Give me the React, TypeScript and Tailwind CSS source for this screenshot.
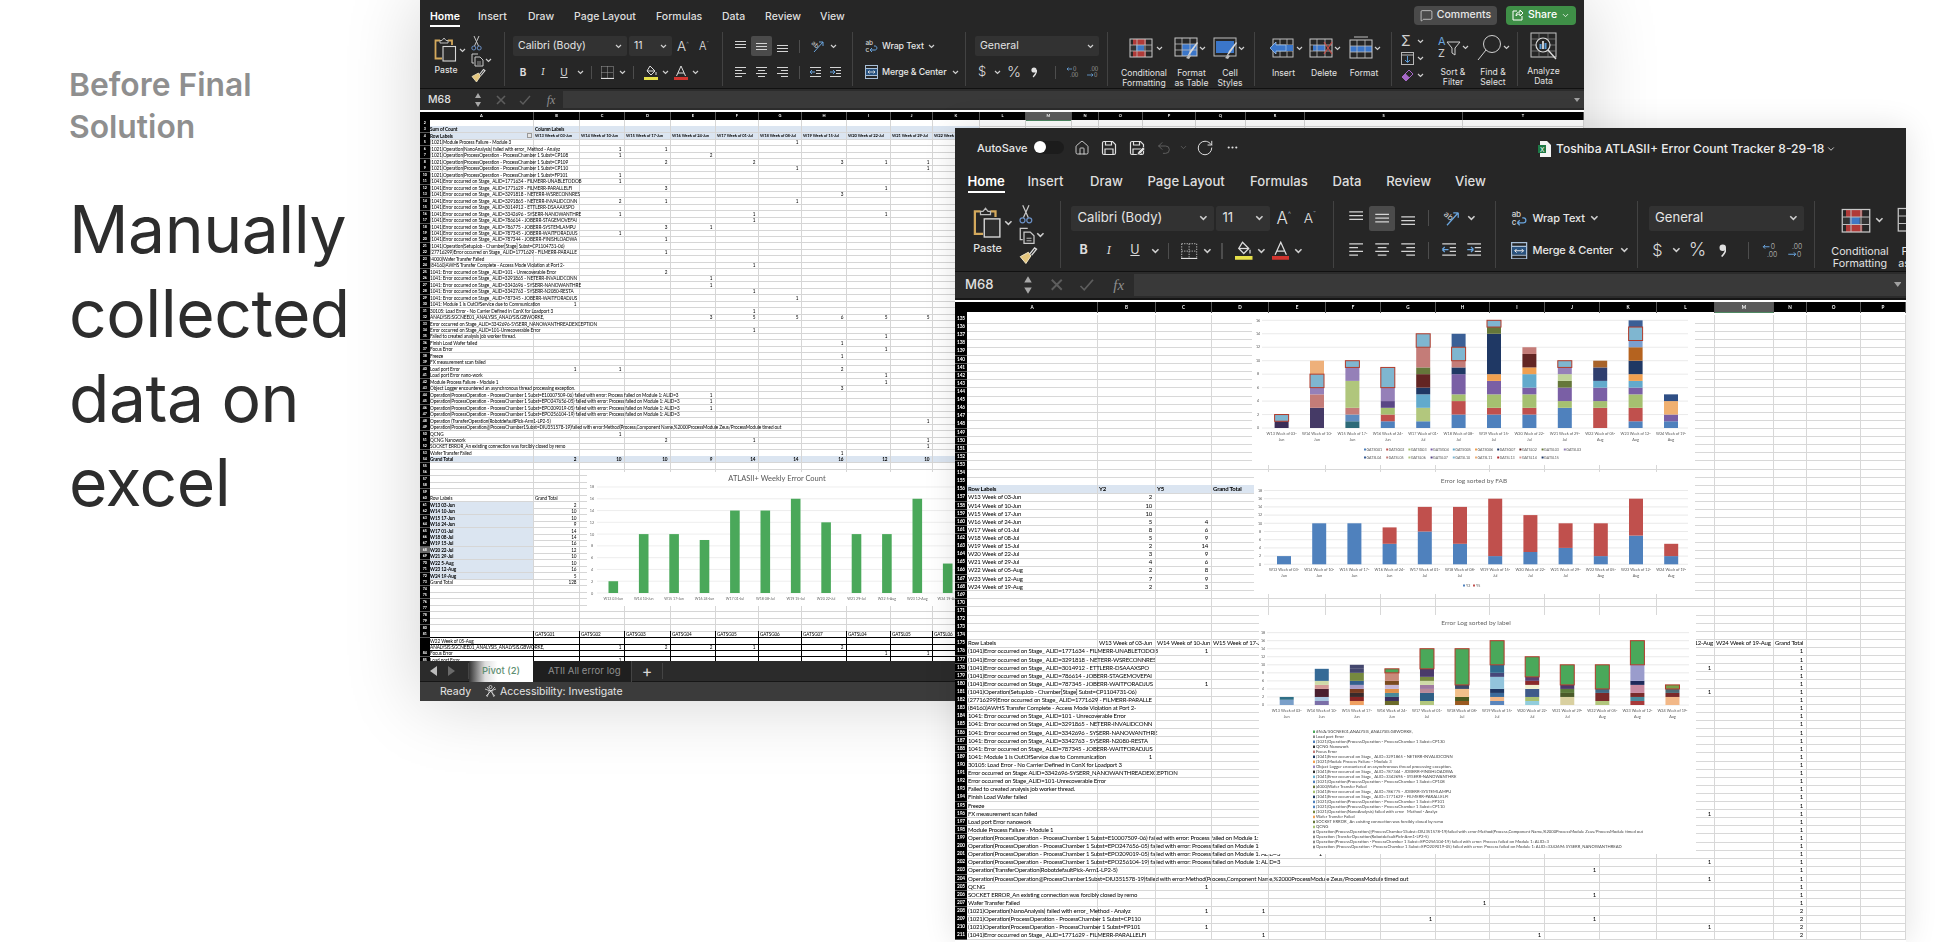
import React from "react";
import { House, Undo2, RotateCw, Ellipsis, ChevronDown, MessageSquare } from "lucide-react";

/* ---------- small icons (base scale = back window) ---------- */
const S = "#c9c9c9";
const Chev = () => (
  <svg width="7" height="5" viewBox="0 0 7 5" className="shrink-0">
    <path d="M1 1l2.5 2.5L6 1" fill="none" stroke="#cfcfcf" strokeWidth="1.2" />
  </svg>
);
const Cell = ({ className, children }: { className: string; children?: React.ReactNode }) => (
  <div className={`flex items-center justify-center shrink-0 ${className}`}>{children}</div>
);
const VBar = () => <div className="w-px h-[13px] bg-[#4d4d4d]" />;

const PasteIcon = () => (
  <svg width="23" height="26" viewBox="0 0 23 26">
    <path d="M6 3.500H1.500v18H8" fill="none" stroke="#d4a95c" strokeWidth="1.800" />
    <path d="M14 3.500h4V8" fill="none" stroke="#d4a95c" strokeWidth="1.800" />
    <path d="M6 6V3.500h2L10 1l2 2.500h2V6z" fill="none" stroke="#bdbdbd" strokeWidth="1" />
    <rect x="9" y="9.500" width="12.500" height="14.500" fill="#2d2d2d" stroke="#d8d8d8" strokeWidth="1.100" />
  </svg>
);
const Scissors = () => (
  <svg width="11" height="16" viewBox="0 0 11 16" fill="none" strokeWidth="1">
    <path d="M3 1l4.500 10M8 1L3.500 11" stroke="#c8c8c8" />
    <circle cx="2.800" cy="13" r="2" stroke="#6a8fc4" />
    <circle cx="8.200" cy="13" r="2" stroke="#6a8fc4" />
  </svg>
);
const CopyIcon = () => (
  <svg width="13" height="14" viewBox="0 0 13 14" fill="none" stroke={S} strokeWidth="1">
    <path d="M7 1H1v9h2" />
    <path d="M4 4h5l3 3v6H4z" />
    <path d="M6 9h4M6 11h4" strokeWidth=".7" />
  </svg>
);
const Brush = () => (
  <svg width="15" height="15" viewBox="0 0 15 15" fill="none">
    <path d="M7.500 5L1 8.500l4.500 5.500L9.500 8z" fill="#e4c67e" stroke="#f0e6c8" strokeWidth=".8" />
    <path d="M8.500 6.500l4-5 1.500 1-4 5" stroke="#dcdcdc" strokeWidth="1.100" />
  </svg>
);
const Lines = ({ d, blue }: { d: string; blue?: string }) => (
  <svg width="13" height="13" viewBox="0 0 13 13">
    <path d={d} fill="none" stroke="#d4d4d4" strokeWidth="1" />
    {blue && <path d={blue} fill="none" stroke="#6aa5de" strokeWidth="1" />}
  </svg>
);
const Orient = () => (
  <svg width="15" height="14" viewBox="0 0 15 14" fill="none">
    <text x="1" y="7" fontSize="6.500" fill="#d4d4d4" transform="rotate(40 4 6)" fontFamily="Inter, sans-serif">ab</text>
    <path d="M4 13L13 3M13 3H9M13 3v4" stroke="#6aa5de" strokeWidth="1" />
  </svg>
);
const WrapIcon = () => (
  <svg width="13" height="14" viewBox="0 0 13 14" fill="none">
    <text x="0.500" y="6" fontSize="6.500" fill="#d4d4d4" fontFamily="Inter, sans-serif">ab</text>
    <text x="0.500" y="13" fontSize="6.500" fill="#d4d4d4" fontFamily="Inter, sans-serif">c</text>
    <path d="M5 11h5c2.500 0 2.500-4 0-4H9M5 11l2-2M5 11l2 2" stroke="#6aa5de" strokeWidth="1" />
  </svg>
);
const MergeIcon = () => (
  <svg width="13" height="14" viewBox="0 0 13 14" fill="none">
    <rect x=".5" y=".5" width="12" height="13" stroke="#a8bfd8" />
    <path d="M.5 3.500h12M.5 10.500h12" stroke="#a8bfd8" />
    <rect x="1" y="4" width="11" height="6" fill="#28527f" />
    <path d="M3 7h7M3 7l1.500-1.500M3 7l1.500 1.500M10 7L8.500 5.500M10 7L8.500 8.500" stroke="#e8e8e8" strokeWidth=".8" />
  </svg>
);
const GridBase = ({ children }: { children?: React.ReactNode }) => (
  <>
    {children}
    <rect x="1" y="2" width="22" height="18" fill="none" stroke="#c8c8c8" strokeWidth="1" />
    <path d="M1 8h22M1 14h22M8 2v18M16 2v18" stroke="#bdbdbd" strokeWidth=".8" />
  </>
);
const CondIcon = () => (
  <svg width="24" height="22" viewBox="0 0 24 22">
    <GridBase>
      <rect x="4" y="2" width="13" height="6" fill="#b03a38" />
      <rect x="4" y="14" width="13" height="6" fill="#b03a38" />
      <rect x="1" y="8" width="22" height="6" fill="#333" />
      <rect x="7" y="8" width="8" height="6" fill="#3f78c4" />
    </GridBase>
  </svg>
);
const BrushOver = () => (
  <g>
    <path d="M13 21l3-6 7-9 1 1-7 10z" fill="#d8d8d8" />
    <path d="M12 22l3-3 2 1-2 3z" fill="#bbbbbb" />
  </g>
);
const TableIcon = () => (
  <svg width="24" height="24" viewBox="0 0 24 24">
    <GridBase>
      <rect x="8" y="8" width="15" height="12" fill="#3b76c9" />
    </GridBase>
    <BrushOver />
  </svg>
);
const StyleIcon = () => (
  <svg width="24" height="24" viewBox="0 0 24 24">
    <rect x="1" y="2" width="22" height="18" fill="none" stroke="#bdbdbd" />
    <rect x="3" y="5" width="18" height="12" fill="#3b76c9" />
    <BrushOver />
  </svg>
);
const InsIcon = () => (
  <svg width="26" height="22" viewBox="0 0 26 22">
    <rect x="4" y="2" width="20" height="18" fill="none" stroke="#bdbdbd" />
    <path d="M4 8h20M4 14h20M11 2v18M18 2v18" stroke="#bdbdbd" strokeWidth=".8" />
    <rect x="7" y="8" width="17" height="6" fill="#3b76c9" />
    <path d="M1 11l6-6v3h10v6H7v3z" fill="#3b76c9" stroke="#9dc0ea" strokeWidth=".8" />
  </svg>
);
const DelIcon = () => (
  <svg width="24" height="22" viewBox="0 0 24 22">
    <GridBase>
      <rect x="4" y="8" width="12" height="6" fill="#3b76c9" />
    </GridBase>
    <path d="M15 5l8 12M23 5l-8 12" stroke="#c9504c" strokeWidth="1.200" />
  </svg>
);
const FmtIcon = () => (
  <svg width="24" height="24" viewBox="0 0 24 24">
    <path d="M5 1h14" stroke="#bdbdbd" />
    <g transform="translate(0 2)">
      <GridBase>
        <rect x="1" y="8" width="22" height="6" fill="#3b76c9" />
      </GridBase>
    </g>
  </svg>
);
const SortIcon = () => (
  <svg width="23" height="24" viewBox="0 0 23 24" fill="none">
    <text x="0" y="10" fontSize="11" fill="#6aa5de" fontFamily="Inter, sans-serif">A</text>
    <text x="0" y="22" fontSize="11" fill="#c8c8c8" fontFamily="Inter, sans-serif">Z</text>
    <path d="M9 7h13l-5 6v7l-3-2v-5z" stroke="#d0d0d0" strokeWidth="1" />
  </svg>
);
const FindIcon = () => (
  <svg width="25" height="27" viewBox="0 0 25 27" fill="none" stroke="#d0d0d0" strokeWidth="1">
    <circle cx="15" cy="10" r="8.500" />
    <path d="M9 16L1 26" />
  </svg>
);
const AnalyzeIcon = () => (
  <svg width="27" height="29" viewBox="0 0 27 29" fill="none">
    <rect x="1" y="1" width="25" height="24" stroke="#c4c4c4" />
    <path d="M1 7h25M1 13h25M1 19h25M9 1v24M18 1v24" stroke="#8b8b8b" strokeWidth=".7" />
    <circle cx="13" cy="13" r="7" fill="#262626" stroke="#dcdcdc" strokeWidth="1.200" />
    <rect x="9.500" y="12" width="2" height="5" fill="#5a9bd8" />
    <rect x="12" y="9" width="2" height="8" fill="#c9c9c9" />
    <rect x="14.500" y="11" width="2" height="6" fill="#5a9bd8" />
    <path d="M18 18l8 9" stroke="#dcdcdc" strokeWidth="1.400" />
  </svg>
);
const SaveIcon = ({ pen }: { pen?: boolean }) => (
  <svg width="16" height="16" viewBox="0 0 16 16" fill="none" stroke="#e0e0e0" strokeWidth="1.200" className="shrink-0">
    <path d="M3 1.500h8.500l3 3V13a1.500 1.500 0 01-1.500 1.500H3A1.500 1.500 0 011.500 13V3A1.500 1.500 0 013 1.500z" />
    <path d="M4.500 1.500v3.500h6V1.500M4 14.500V9h8v5.500" />
    {pen && <path d="M8 15l1-3 5-5 2 2-5 5z" fill="#e0e0e0" stroke="#262626" strokeWidth=".6" />}
  </svg>
);

/* ---------- ribbon ---------- */
const Combo = ({ className, text }: { className: string; text: string }) => (
  <div className={`h-[20px] bg-[#323232] rounded-[2px] flex items-center justify-between px-[5px] text-[10.5px] text-[#e4e4e4] shrink-0 ${className}`}>
    <span>{text}</span>
    <Chev />
  </div>
);
const Big = ({ label, children }: { label: React.ReactNode; children: React.ReactNode }) => (
  <div className="flex flex-col items-center text-[8.6px] leading-[10px] text-[#e2e2e2] text-center">
    <div className="h-[26px] flex items-center">{children}</div>
    <div className="mt-[7px] whitespace-nowrap">{label}</div>
  </div>
);

function Tabs({ actions }: { actions?: boolean }) {
  return (
    <div className="h-[30px] flex items-center text-[10.5px] font-medium text-[#dedede] pl-[10px] pt-[4px]">
      <div className="w-[48px] text-white font-semibold"><span className="border-b-2 border-white pb-[2px]">Home</span></div>
      <div className="w-[50px]">Insert</div>
      <div className="w-[46px]">Draw</div>
      <div className="w-[82px]">Page Layout</div>
      <div className="w-[66px]">Formulas</div>
      <div className="w-[43px]">Data</div>
      <div className="w-[55px]">Review</div>
      <div className="w-[40px]">View</div>
      {actions && (
        <div className="ml-auto mr-[8px] mb-[4px] flex gap-[9px]">
          <div className="w-[83px] h-[19px] rounded-[4px] bg-[#4a4a4a] flex items-center justify-center gap-[4px] text-[#e8e8e8]">
            <MessageSquare size={13} strokeWidth={1.3} />
            <span>Comments</span>
          </div>
          <div className="w-[70px] h-[19px] rounded-[4px] bg-[#3f8f47] flex items-center justify-center gap-[4px] text-white">
            <svg width="12" height="12" viewBox="0 0 12 12" fill="none" stroke="#fff" strokeWidth="1">
              <path d="M5 2H1v9h9V7" />
              <path d="M4 7c0-3 2-4 4-4V1l3 3-3 3V5C6 5 5 6 4 7z" />
            </svg>
            <span>Share</span>
            <ChevronDown size={9} />
          </div>
        </div>
      )}
    </div>
  );
}

function Ribbon() {
  return (
    <div className="h-[59px] w-[1164px] flex text-[#e2e2e2] bg-[#262626] border-b border-[#111]">
      {/* clipboard */}
      <div className="w-[85px] shrink-0 my-[2px] border-r border-[#424242] flex pl-[14px]">
        <div className="w-[36px] pt-[5px]">
          <div className="flex items-center gap-[2px]"><PasteIcon /><Chev /></div>
          <div className="text-[8.6px] font-medium mt-[1px] w-[24px] text-center">Paste</div>
        </div>
        <div className="flex flex-col items-start pt-[3px] gap-[1px] ml-[1px]">
          <Scissors />
          <div className="flex items-center gap-[1px] mt-[1px]"><CopyIcon /><Chev /></div>
          <Brush />
        </div>
      </div>
      {/* font */}
      <div className="w-[218px] shrink-0 my-[2px] border-r border-[#424242] pl-[8px] pt-[4px]">
        <div className="flex items-center">
          <Combo className="w-[114px]" text="Calibri (Body)" />
          <Combo className="w-[43px] ml-[2px]" text="11" />
          <Cell className="w-[22px] text-[13.5px] font-light">A<span className="text-[6px] -mt-[6px] text-[#9fb4c8]">^</span></Cell>
          <Cell className="w-[20px] text-[11px] font-light">A<span className="text-[6px] -mt-[6px] text-[#9fb4c8]">ˇ</span></Cell>
        </div>
        <div className="flex items-center mt-[8px] text-[10px] text-[#dcdcdc] h-[16px]">
          <Cell className="w-[20px] font-bold">B</Cell>
          <Cell className="w-[20px] italic font-serif">I</Cell>
          <Cell className="w-[22px] underline">U</Cell>
          <Cell className="w-[10px]"><Chev /></Cell>
          <Cell className="w-[12px]"><VBar /></Cell>
          <Cell className="w-[21px]">
            <svg width="13" height="13" viewBox="0 0 13 13"><path d="M.5.5h12M.5 6.500h12M6.500.5v12M.5.5v12M12.500.5v12" stroke="#9a9a9a" strokeDasharray="1 1" fill="none" /><path d="M0 12.500h13" stroke="#e0e0e0" strokeWidth="1.200" /></svg>
          </Cell>
          <Cell className="w-[8px]"><Chev /></Cell>
          <Cell className="w-[15px]"><VBar /></Cell>
          <Cell className="w-[20px]">
            <svg width="14" height="15" viewBox="0 0 14 15"><path d="M6 1l5 5-4 4-4-4z" fill="none" stroke="#dcdcdc" /><path d="M3 6h8" stroke="#dcdcdc" /><path d="M12 7v3" stroke="#dcdcdc" /><rect x="0" y="12" width="14" height="3" fill="#e6e04a" /></svg>
          </Cell>
          <Cell className="w-[8px]"><Chev /></Cell>
          <Cell className="w-[23px]">
            <svg width="14" height="15" viewBox="0 0 14 15"><path d="M2.500 11L7 1l4.500 10M4 8h6" fill="none" stroke="#dcdcdc" /><rect x="0" y="12" width="14" height="3" fill="#d2352f" /></svg>
          </Cell>
          <Cell className="w-[6px]"><Chev /></Cell>
        </div>
      </div>
      {/* alignment */}
      <div className="w-[130px] shrink-0 my-[2px] border-r border-[#424242] pl-[7px] pt-[4px]">
        <div className="flex items-center">
          <Cell className="w-[21px] h-[20px]"><Lines d="M1 1.500h11M1 4.500h11M1 7.500h11" /></Cell>
          <Cell className="w-[21px] h-[20px] bg-[#4b4b4b] rounded-[2px]"><Lines d="M1 3.500h11M1 6.500h11M1 9.500h11" /></Cell>
          <Cell className="w-[21px] h-[20px]"><Lines d="M1 5.500h11M1 8.500h11M1 11.500h11" /></Cell>
          <Cell className="w-[12px]"><VBar /></Cell>
          <Cell className="w-[24px]"><Orient /></Cell>
          <Cell className="w-[8px]"><Chev /></Cell>
        </div>
        <div className="flex items-center mt-[8px] h-[16px]">
          <Cell className="w-[21px]"><Lines d="M1 1.500h11M1 4.500h7M1 7.500h11M1 10.500h7" /></Cell>
          <Cell className="w-[21px]"><Lines d="M1 1.500h11M3 4.500h7M1 7.500h11M3 10.500h7" /></Cell>
          <Cell className="w-[21px]"><Lines d="M1 1.500h11M5 4.500h7M1 7.500h11M5 10.500h7" /></Cell>
          <Cell className="w-[12px]"><VBar /></Cell>
          <Cell className="w-[20px]"><Lines d="M1 1.500h11M7 4.500h5M7 7.500h5M1 10.500h11" blue="M6 6H1M1 6l2-2M1 6l2 2" /></Cell>
          <Cell className="w-[20px]"><Lines d="M1 1.500h11M7 4.500h5M7 7.500h5M1 10.500h11" blue="M1 6h5M6 6L4 4M6 6L4 8" /></Cell>
        </div>
      </div>
      {/* wrap */}
      <div className="w-[113px] shrink-0 my-[2px] border-r border-[#424242] pl-[12px] text-[8.8px] tracking-[-0.1px] font-medium text-[#e6e6e6]">
        <div className="flex items-center h-[20px] mt-[4px] gap-[4px]"><WrapIcon /><span className="w-[42px] whitespace-nowrap">Wrap Text</span><Chev /></div>
        <div className="flex items-center h-[16px] mt-[8px] gap-[4px]"><MergeIcon /><span className="w-[66px] whitespace-nowrap">Merge &amp; Center</span><Chev /></div>
      </div>
      {/* number */}
      <div className="w-[142px] shrink-0 my-[2px] border-r border-[#424242] pl-[9px] pt-[4px]">
        <Combo className="w-[124px]" text="General" />
        <div className="flex items-center h-[16px] mt-[8px] text-[13px] text-[#dcdcdc] font-light">
          <Cell className="w-[14px]">$</Cell>
          <Cell className="w-[16px]"><Chev /></Cell>
          <Cell className="w-[18px] text-[15px]">%</Cell>
          <Cell className="w-[22px]">
            <svg width="6" height="11" viewBox="0 0 6 11"><circle cx="3" cy="3" r="2.600" fill="#e0e0e0" /><path d="M5.600 3c0 3-1.500 5-3.500 7" fill="none" stroke="#e0e0e0" strokeWidth="1.300" /></svg>
          </Cell>
          <Cell className="w-[20px]"><VBar /></Cell>
          <Cell className="w-[14px]">
            <svg width="13" height="12" viewBox="0 0 13 12"><text x="7" y="5" fontSize="5.500" fill="#c4c4c4" fontFamily="Inter, sans-serif">0</text><text x="4" y="11" fontSize="5.500" fill="#c4c4c4" fontFamily="Inter, sans-serif">.00</text><path d="M6 3H1l1.500-1.500M1 3l1.500 1.500" fill="none" stroke="#6aa5de" strokeWidth=".8" /></svg>
          </Cell>
          <Cell className="w-[6px]" />
          <Cell className="w-[14px]">
            <svg width="13" height="12" viewBox="0 0 13 12"><text x="4" y="5" fontSize="5.500" fill="#c4c4c4" fontFamily="Inter, sans-serif">.00</text><text x="8" y="11" fontSize="5.500" fill="#c4c4c4" fontFamily="Inter, sans-serif">0</text><path d="M1 9h6L5.500 7.500M7 9L5.500 10.500" fill="none" stroke="#6aa5de" strokeWidth=".8" /></svg>
          </Cell>
        </div>
      </div>
      {/* styles */}
      <div className="w-[147px] shrink-0 my-[2px] border-r border-[#424242] flex pl-[9px] pt-[3px]">
        <div className="w-[54px]"><Big label={<>Conditional<br />Formatting</>}><span className="ml-[4px]"><CondIcon /></span><span className="ml-[3px]"><Chev /></span></Big></div>
        <div className="w-[41px]"><Big label={<>Format<br />as Table</>}><span className="-ml-[4px]"><TableIcon /></span><span className="ml-[1px]"><Chev /></span></Big></div>
        <div className="w-[36px]"><Big label={<>Cell<br />Styles</>}><span className="-ml-[3px]"><StyleIcon /></span><span className="ml-[1px]"><Chev /></span></Big></div>
      </div>
      {/* cells */}
      <div className="w-[137px] shrink-0 my-[2px] border-r border-[#424242] flex pl-[8px] pt-[3px]">
        <div className="w-[41px]"><Big label="Insert"><span className="ml-[4px]"><InsIcon /></span><span className="ml-[1px]"><Chev /></span></Big></div>
        <div className="w-[40px]"><Big label="Delete"><span className="ml-[1px]"><DelIcon /></span><span className="ml-[1px]"><Chev /></span></Big></div>
        <div className="w-[40px]"><Big label="Format"><span className="ml-[1px]"><FmtIcon /></span><span className="ml-[1px]"><Chev /></span></Big></div>
      </div>
      {/* editing */}
      <div className="w-[126px] shrink-0 my-[2px] border-r border-[#424242] flex pl-[9px] pt-[2px]">
        <div className="w-[33px] flex flex-col gap-[3px]">
          <div className="flex items-center gap-[3px] h-[14px]"><span className="text-[14px] leading-none w-[13px] text-[#cfcfcf]">Σ</span><Chev /></div>
          <div className="flex items-center gap-[3px] h-[14px]">
            <svg width="13" height="13" viewBox="0 0 13 13"><rect x=".5" y=".5" width="12" height="12" fill="none" stroke="#b8b8b8" /><path d="M.5 3h12" stroke="#b8b8b8" /><path d="M6.500 4v6M4 8l2.500 2.500L9 8" fill="none" stroke="#5a9bd8" /></svg>
            <Chev />
          </div>
          <div className="flex items-center gap-[3px] h-[14px]">
            <svg width="13" height="13" viewBox="0 0 13 13"><path d="M8 1l4 4-7 7-4-4z" fill="none" stroke="#a768c9" /><path d="M4.500 4.500l4 4L5 12 1 8z" fill="#a768c9" /></svg>
            <Chev />
          </div>
        </div>
        <div className="w-[38px]"><Big label={<>Sort &amp;<br />Filter</>}><SortIcon /><span className="ml-[1px]"><Chev /></span></Big></div>
        <div className="w-[38px] ml-[2px]"><Big label={<>Find &amp;<br />Select</>}><FindIcon /><span className="ml-[1px]"><Chev /></span></Big></div>
      </div>
      {/* analyze */}
      <div className="w-[50px] shrink-0 pl-[1px] pt-[3px]">
        <Big label={<>Analyze<br />Data</>}><AnalyzeIcon /></Big>
      </div>
    </div>
  );
}

function FormulaBar() {
  return (
    <div className="h-[21px] flex items-center bg-[#2b2b2b] text-[#e0e0e0]">
      <div className="w-[54px] pl-[8px] text-[10.5px] font-medium">M68</div>
      <svg width="8" height="16" viewBox="0 0 8 16"><path d="M4 1l3 5H1zM4 15l3-5H1z" fill="#a8a8a8" /></svg>
      <svg width="14" height="14" viewBox="0 0 14 14" className="ml-[12px]"><path d="M3 3l8 8M11 3l-8 8" stroke="#5d5d5d" strokeWidth="1.600" /></svg>
      <svg width="14" height="14" viewBox="0 0 14 14" className="ml-[10px]"><path d="M2 8l3 3 7-8" fill="none" stroke="#5d5d5d" strokeWidth="1.400" /></svg>
      <span className="ml-[8px] w-[22px] text-[12px] italic text-[#8f8f8f] text-center" style={{ fontFamily: '"Liberation Serif", serif' }}>fx</span>
      <div className="flex-1 h-[17px] bg-[#393939] ml-[1px] flex items-center justify-end pr-[4px]">
        <svg width="6" height="4" viewBox="0 0 6 4"><path d="M0 0h6L3 4z" fill="#a0a0a0" /></svg>
      </div>
    </div>
  );
}

/* ---------- data ---------- */
const E = (s: string) => "(1041)Error occurred on Stage_ ALID=" + s;
const E2 = (s: string) => "1041: Error occurred on Stage_ ALID=" + s;
const P = (s: string) => "(1021)Operation(ProcessOperation - ProcessChamber 1 Subst=" + s;
const PF = (s: string) => "Operation(ProcessOperation - ProcessChamber 1 Subst=" + s + ") failed with error: Process failed on Module 1: ALID=3";
const LONG = "Operation(ProcessOperation@ProcessChamber1Subst=DIU351578-19)failed with error:Method(Process,Component Name,%2000ProcessModule Zeus/ProcessModule timed out";
const NANO = "(1021)Operation(NanoAnalysis) failed with error_ Method - Analyz";
type R = { a?: string; v?: Record<string, string | number>; k?: string };
const WK = ["W13 Week of 03-Jun", "W14 Week of 10-Jun", "W15 Week of 17-Jun", "W16 Week of 24-Jun", "W17 Week of 01-Jul", "W18 Week of 08-Jul", "W19 Week of 15-Jul", "W20 Week of 22-Jul", "W21 Week of 29-Jul", "W22 Week of 05-Aug", "W23 Week of 12-Aug", "W24 Week of 19-Aug"];

const rows1: Record<number, R> = {
  3: { a: "Sum of Count", v: { B: "Column Labels" }, k: "head" },
  4: { a: "Row Labels", v: { B: WK[0], C: WK[1], D: WK[2], E: WK[3], F: WK[4], G: WK[5], H: WK[6], I: WK[7], J: WK[8], K: "W22 Week of 05-Aug" }, k: "head" },
  5: { a: "(1021)Module Process Failure - Module 3", v: { G: 1 } },
  6: { a: NANO, v: { C: 1, D: 1 } },
  7: { a: P("CP108"), v: { C: 1, E: 2 } },
  8: { a: P("CP109"), v: { D: 2, F: 2, H: 3, I: 1, J: 1 } },
  9: { a: P("CP110"), v: { G: 1, J: 1 } },
  10: { a: P("FP101"), v: { C: 1 } },
  11: { a: E("1771634 - FILMERR-UNABLETODOB"), v: { C: 1 } },
  12: { a: E("1771629 - FILMERR-PARALLELFI"), v: { D: 3, I: 1 } },
  13: { a: E("3291818 - NETERR-WSRECONNRES"), v: { H: 3 } },
  14: { a: E("3291865 - NETERR-INVALIDCONN"), v: { C: 2, D: 1, G: 1 } },
  15: { a: E("3014912 - ETTLERR-DSAAAXSPO") },
  16: { a: E("3342696 - SYSERR-NANOWANTHRE"), v: { C: 1, F: 1, I: 1 } },
  17: { a: E("786614 - JOBERR-STAGEMOVEFAI"), v: { F: 1 } },
  18: { a: E("786775 - JOBERR-SYSTEMLAMPU"), v: { D: 3, E: 1 } },
  19: { a: E("787345 - JOBERR-WAITFORADJUS"), v: { C: 1 } },
  20: { a: E("787344 - JOBERR-FINISHLOADWA"), v: { D: 1 } },
  21: { a: "(1041)Operation(SetupJob - Chamber[Stage] Subst=CP1104731-06)" },
  22: { a: "(27716299)Error occurred on Stage_ ALID=1771629 - FILMERR-PARALLE", v: { D: 1 } },
  23: { a: "(4000)Wafer Transfer Failed" },
  24: { a: "(84160)AWHS Transfer Complete - Access Mode Violation at Port 2-", v: { F: 1 } },
  25: { a: E2("101 - Unrecoverable Error"), v: { D: 2 } },
  26: { a: E2("3291865 - NETERR-INVALIDCONN"), v: { E: 1 } },
  27: { a: E2("3342696 - SYSERR-NANOWANTHRE"), v: { E: 1 } },
  28: { a: E2("3342763 - SYSERR-N2080-RESTA"), v: { F: 1 } },
  29: { a: E2("787345 - JOBERR-WAITFORADJUS"), v: { G: 1 } },
  30: { a: "1041: Module 1 is OutOfService due to Communication", v: { B: 1 } },
  31: { a: "30105: Load Error - No Carrier Defined in ConX for Loadport 3", v: { F: 1 } },
  32: { a: "ANALYSIS:SGCNEE01_ANALYSIS_ANALYSIS.GBWORKE,", v: { E: 3, F: 5, G: 5, H: 6, I: 5, J: 5 } },
  33: { a: "Error occurred on Stage_ALID=3342696-SYSERR_NANOWANTHREADEXCEPTION" },
  34: { a: "Error occurred on Stage_ALID=101-Unrecoverable Error", v: { F: 1 } },
  35: { a: "Failed to created analysis job worker thread.", v: { I: 1 } },
  36: { a: "Finish Load Wafer failed", v: { H: 1 } },
  37: { a: "Focus Error", v: { I: 1 } },
  38: { a: "Freeze", v: { H: 1 } },
  39: { a: "FX measurement scan failed" },
  40: { a: "Load port Error", v: { B: 1, C: 1, H: 2 } },
  41: { a: "Load port Error nano-work", v: { I: 1 } },
  42: { a: "Module Process Failure - Module 1", v: { I: 1 } },
  43: { a: "Object Logger encountered an asynchronous thread processing exception.", v: { H: 3 } },
  44: { a: PF("E10007509-06"), v: { E: 1 } },
  45: { a: PF("EPO247656-05"), v: { E: 1 } },
  46: { a: PF("EPO209019-05"), v: { E: 1 } },
  47: { a: PF("EPO256104-19") },
  48: { a: "Operation (TransferOperation(RobotdefaultPick-Arm1-LP2-5)", v: { J: 1 } },
  49: { a: LONG },
  50: { a: "QCNG", v: { C: 1 } },
  51: { a: "QCNG Nanowork", v: { D: 2, F: 1, J: 1 } },
  52: { a: "SOCKET ERROR_An existing connection was forcibly closed by remo", v: { J: 1 } },
  53: { a: "Wafer Transfer Failed", v: { H: 1 } },
  54: { a: "Grand Total", v: { B: 2, C: 10, D: 10, E: 9, F: 14, G: 14, H: 16, I: 12, J: 10 }, k: "total" },
  60: { a: "Row Labels", v: { B: "Grand Total" }, k: "plain" },
  73: { a: "Grand Total", v: { B: 128 } },
  81: { v: { B: "GATSG01", C: "GATSG02", D: "GATSG03", E: "GATSG04", F: "GATSG05", G: "GATSG06", H: "GATSG07", I: "GATSL04", J: "GATSL05", K: "GATSL06" }, k: "black" },
  82: { a: "W22 Week of 05-Aug", k: "black" },
  83: { a: "ANALYSIS:SGCNEE01_ANALYSIS_ANALYSIS.GBWORKE,", v: { C: 1, D: 2, E: 2, F: 1, H: 2 }, k: "black" },
  84: { a: "Focus Error", v: { I: 1, J: 1 }, k: "black" },
  85: { a: "Load port Error", v: { C: 1 }, k: "black" },
};
["W13 03-Jun", "W14 10-Jun", "W15 17-Jun", "W16 24-Jun", "W17 01-Jul", "W18 08-Jul", "W19 15-Jul", "W20 22-Jul", "W21 29-Jul", "W22 5-Aug", "W23 12-Aug", "W24 19-Aug"].forEach((a, i) => {
  rows1[61 + i] = { a, v: { B: [2, 10, 10, 9, 14, 14, 16, 12, 10, 10, 16, 5][i] }, k: "pivot" };
});
const cols1 = "BCDEFGHIJKLMNOPQRST".split("");
const nums1 = Array.from({ length: 84 }, (_, i) => i + 2);

const Y2 = [2, 10, 10, 5, 8, 5, 2, 3, 4, 2, 7, 2];
const Y5 = [0, 0, 0, 4, 6, 9, 14, 9, 6, 8, 9, 3];
const rows2: Record<number, R> = {
  156: { a: "Row Labels", v: { B: "Y2", C: "Y5", D: "Grand Total" }, k: "head" },
  175: { a: "Row Labels", v: { B: WK[0], C: WK[1], D: WK[2], L: "W23 Week of 12-Aug", M: "W24 Week of 19-Aug", N: "Grand Total" }, k: "hdr2" },
  176: { a: E("1771634 - FILMERR-UNABLETODOB"), v: { C: 1, N: 1 } },
  177: { a: E("3291818 - NETERR-WSRECONNRES"), v: { N: 1 } },
  178: { a: E("3014912 - ETTLERR-DSAAAXSPO"), v: { L: 1, N: 1 } },
  179: { a: E("786614 - JOBERR-STAGEMOVEFAI"), v: { N: 1 } },
  180: { a: E("787345 - JOBERR-WAITFORADJUS"), v: { C: 1, N: 1 } },
  181: { a: "(1041)Operation(SetupJob - Chamber[Stage] Subst=CP1104731-06)", v: { L: 1, N: 1 } },
  182: { a: "(27716299)Error occurred on Stage_ ALID=1771629 - FILMERR-PARALLE", v: { N: 1 } },
  183: { a: "(84160)AWHS Transfer Complete - Access Mode Violation at Port 2-", v: { N: 1 } },
  184: { a: E2("101 - Unrecoverable Error"), v: { N: 1 } },
  185: { a: E2("3291865 - NETERR-INVALIDCONN"), v: { N: 1 } },
  186: { a: E2("3342696 - SYSERR-NANOWANTHRE"), v: { N: 1 } },
  187: { a: E2("3342763 - SYSERR-N2080-RESTA"), v: { N: 1 } },
  188: { a: E2("787345 - JOBERR-WAITFORADJUS"), v: { N: 1 } },
  189: { a: "1041: Module 1 is OutOfService due to Communication", v: { B: 1, N: 1 } },
  190: { a: "30105: Load Error - No Carrier Defined in ConX for Loadport 3", v: { N: 1 } },
  191: { a: "Error occurred on Stage: ALID=3342696-SYSERR_NANOWANTHREADEXCEPTION", v: { N: 1 } },
  192: { a: "Error occurred on Stage_ALID=101-Unrecoverable Error", v: { N: 1 } },
  193: { a: "Failed to created analysis job worker thread.", v: { N: 1 } },
  194: { a: "Finish Load Wafer failed", v: { N: 1 } },
  195: { a: "Freeze", v: { N: 1 } },
  196: { a: "FX measurement scan failed", v: { L: 1, N: 1 } },
  197: { a: "Load port Error nanowork", v: { N: 1 } },
  198: { a: "Module Process Failure - Module 1", v: { N: 1 } },
  199: { a: PF("E10007509-06"), v: { N: 1 } },
  200: { a: PF("EPO247656-05"), v: { N: 1 } },
  201: { a: PF("EPO209019-05"), v: { E: 1, N: 1 } },
  202: { a: PF("EPO256104-19"), v: { L: 1, N: 1 } },
  203: { a: "Operation(TransferOperation(RobotdefaultPick-Arm1-LP2-5)", v: { J: 1, N: 1 } },
  204: { a: LONG, v: { L: 1, N: 1 } },
  205: { a: "QCNG", v: { C: 1, N: 1 } },
  206: { a: "SOCKET ERROR_An existing connection was forcibly closed by remo", v: { J: 1, N: 1 } },
  207: { a: "Wafer Transfer Failed", v: { H: 1, N: 1 } },
  208: { a: NANO, v: { C: 1, D: 1, N: 2 } },
  209: { a: P("CP110"), v: { G: 1, J: 1, N: 2 } },
  210: { a: P("FP101"), v: { C: 1, L: 1, N: 2 } },
  211: { a: E("1771629 - FILMERR-PARALLELFI"), v: { D: 1, I: 1, N: 2 } },
};
WK.forEach((a, i) => {
  rows2[157 + i] = { a, v: { B: Y2[i], ...(Y5[i] ? { C: Y5[i] } : {}) } };
});
const cols2 = "BCDEFGHIJKLMNOP".split("");
const nums2 = Array.from({ length: 77 }, (_, i) => i + 135);

/* ---------- sheets ---------- */
function Sheet1() {
  return (
    <div className="relative h-[549px] overflow-hidden bg-white blur-[0.3px]" style={{ fontFamily: 'Lato, "Liberation Sans", sans-serif' }}>
      <div className="grid grid-cols-[9.6px_104.4px_46px_45px_46px_45px_43px_43px_45px_44px_42px_47px_46px_46px_27px_44px_53px_50px_59px_158px_121px] h-[8px] bg-black text-white text-[4px] leading-[8px] font-bold text-center">
        <div />
        {["A", ...cols1].map((c) => (
          <div key={c} className={`border-r border-[#555] ${c === "M" ? "bg-[#5b5b5b] border-b border-b-[#4f8a63]" : ""}`}>{c}</div>
        ))}
      </div>
      {nums1.map((n) => {
        const r = rows1[n] || {};
        const black = r.k === "black";
        const band = r.k === "head" || r.k === "total";
        const line = black ? "border-black" : "border-[#d6d6d6]";
        return (
          <div key={n} className={`grid grid-cols-[9.6px_104.4px_46px_45px_46px_45px_43px_43px_45px_44px_42px_47px_46px_46px_27px_44px_53px_50px_59px_158px_121px] h-[6.47px] text-[4.7px] tracking-[-0.02em] leading-[6px] text-black ${r.k === "total" ? "font-bold" : ""}`}>
            <div className={`text-white text-[3.6px] font-bold text-center border-b border-[#555] ${n === 68 ? "bg-[#666]" : "bg-black"}`}>{n === 82 || n === 83 ? "" : n}</div>
            <div className={`relative whitespace-nowrap pl-[0.5px] border-r border-b ${line} ${band || r.k === "pivot" ? "bg-[#dbe5f1] font-bold" : ""}`}>
              {r.a}
              {n === 4 && <span className="absolute right-[1px] top-[0.5px] w-[5px] h-[5px] bg-[#e6e6e6] border border-[#999]" />}
            </div>
            {cols1.map((c, ci) => {
              const val = r.v?.[c];
              const isText = typeof val === "string";
              return (
                <div key={c} className={`whitespace-nowrap border-r border-b ${line} ${isText ? "text-left pl-[1px]" : "text-right pr-[2.500px]"} ${band && (r.k === "total" ? ci < 12 : ci < 10) ? "bg-[#dbe5f1]" : ""} ${band && isText ? "font-bold" : ""} ${isText && n === 4 ? "text-[4.1px] overflow-hidden" : ""}`}>
                  {val}
                </div>
              );
            })}
          </div>
        );
      })}
      {/* chart over the cells */}
      <div className="absolute left-[167px] top-[360px] w-[400px] h-[134px] bg-white">
        <svg width="400" height="134" viewBox="0 0 400 134">
          <text x="190" y="9" fontSize="7.500" fill="#595959" textAnchor="middle">ATLASII+ Weekly Error Count</text>
          {Array.from({ length: 10 }, (_, i) => (
            <g key={i}>
              <line x1="10" x2="400" y1={121 - i * 11.78} y2={121 - i * 11.78} stroke="#e6e6e6" strokeWidth=".7" />
              <text x="5" y={122.500 - i * 11.78} fontSize="3.800" fill="#666" textAnchor="middle">{i * 2}</text>
            </g>
          ))}
          {[2, 10, 10, 9, 14, 14, 16, 12, 10, 10, 16, 5].map((v, i) => (
            <g key={i}>
              <rect x={21.500 + i * 30.4} y={121 - v * 5.89} width="9.600" height={v * 5.89} fill="#4aa85a" />
              <text x={26.300 + i * 30.4} y="127.500" fontSize="3.600" fill="#666" textAnchor="middle">{["W13 03-Jun", "W14 10-Jun", "W15 17-Jun", "W16 24-Jun", "W17 01-Jul", "W18 08-Jul", "W19 15-Jul", "W20 22-Jul", "W21 29-Jul", "W22 5-Aug", "W23 12-Aug", "W24 19-Aug"][i]}</text>
            </g>
          ))}
        </svg>
      </div>
    </div>
  );
}

type Seg = [number, string, boolean?];
const BL = "#4f81bd", RD = "#c0504d", GR = "#a5c070", PU = "#7a5fa5", CY = "#62aacc", OR = "#f0a050", NV = "#1f3864", MR = "#632523", OL = "#65773a", RS = "#c47c78", HL = "#7fb6d0", LP = "#9580b8", GN = "#4aa85a";
const stack1: Seg[][] = [
  [[1, "#3b2d57"], [1, HL, true]],
  [[3, "#453a66"], [2, RS], [1, LP], [2, HL, true], [2, "#eeb07a"]],
  [[1, "#2d6a78"], [1, "#5e8cc0"], [1, RS], [4, "#b0c67c"], [2, LP], [1, HL, true]],
  [[1, BL], [1, RD], [1, GR], [1, "#5a4785"], [2, LP], [3, HL, true]],
  [[1, BL], [2, "#b2c77d"], [2, CY], [1, NV], [2, MR], [1, OL], [3, RS], [2, HL, true]],
  [[2, BL], [2, RD], [1, GR], [3, PU], [1, NV], [1, RS], [2, HL, true], [2, "#3a5f96"]],
  [[2, BL], [1, RD], [2, GR], [2, PU], [1, OR], [6, NV], [1, OL], [1, HL, true]],
  [[2, BL], [1, RD], [2, GR], [1, PU], [2, CY], [1, OR], [2, MR], [1, RS]],
  [[3, BL], [1, GR], [2, PU], [1, OL], [1, "#c0d49a"], [1, LP], [1, HL, true]],
  [[3, RD], [1, GR], [2, PU], [1, CY], [2, "#2f3e6e"], [1, "#a8632a"]],
  [[1, BL], [2, RD], [2, GR], [1, PU], [1, CY], [1, OR], [2, NV], [2, "#b5631f"], [1, "#7ba0cf"], [2, HL, true], [1, "#3a5f96"]],
  [[1, BL], [1, PU], [2, "#f0b070"], [1, "#2f4f85"]],
];
const stack2: Seg[][] = Y2.map((v, i) => [[v, "#4f81bd"], [Y5[i], "#c0504d"]]);
const stack3: Seg[][] = [
  [[1.3, "#7a9fc9"], [0.7, "#2f6f86"]],
  [[1, "#7b6fa8"], [1, "#a9c6e0"], [2, "#4a1f2f"], [1, "#d49a96"], [1, "#cfdba8"], [3, "#356a96"]],
  [[1, "#f0a060"], [1, "#8a2424"], [1, "#3a2a2a"], [1, "#7a3a1f"], [1, "#a99cc8"], [1, "#355f8e"], [2, "#76893f"], [1, "#44476e"], [1, "#44476e"]],
  [[1, "#6b6b2a"], [1, "#3a2f5f"], [1, "#4a8a9a"], [1, "#e0904a"], [1, "#c8b8d8"], [1, "#7a4a20"], [2, "#c98a7a"], [1, GN, true]],
  [[1, "#b2c77d"], [2, "#2f5f85"], [1, "#b88a9a"], [1, "#a07aa0"], [1, "#cfdba8"], [1, "#76893f"], [2, "#4a3a6a"], [5, GN, true]],
  [[1, "#9a5a1f"], [1, "#4a5a1f"], [2, "#f2c08a"], [1, "#3a4a6a"], [9, GN, true]],
  [[1, "#5a85bc"], [1, "#f2b888"], [1, "#3a6a9a"], [1, NV], [3, "#92c4dc"], [1, "#46477a"], [2, "#2f6a8e"], [6, GN, true]],
  [[1, "#92cddc"], [1, "#a9c070"], [2, "#3f5a8a"], [1, "#f0f0d0"], [1, "#8a2a2a"], [1, "#5a4070"], [5, GN, true]],
  [[2, "#d9d0a0"], [1, "#4a5a2a"], [1, "#5a7a3a"], [1, "#4a3a6a"], [5, GN, true]],
  [[1, "#b2c77d"], [2, "#7a2a2a"], [1, "#3f6a85"], [6, GN, true]],
  [[1, "#a83a3a"], [1, "#4a8a9a"], [1, "#7a2a2a"], [2, "#c98aa0"], [1, "#1f2a5a"], [4, "#9a9ccc"], [6, GN, true]],
  [[2, "#f2b888"], [1, "#7a2a2a"], [1, "#4a6a75"], [1, "#76a04a", true]],
];

function Bars({ data, x0, dx, bw, zero, unit }: { data: Seg[][]; x0: number; dx: number; bw: number; zero: number; unit: number }) {
  return (
    <>
      {data.map((segs, i) => {
        let t = 0;
        const x = x0 + i * dx - bw / 2;
        return (
          <g key={i}>
            {segs.map((s, j) => {
              const y = zero - (t + s[0]) * unit;
              t += s[0];
              return <rect key={j} x={x} y={y} width={bw} height={s[0] * unit} fill={s[1]} />;
            })}
            {(() => {
              let t2 = 0;
              return segs.map((s, j) => {
                const y = zero - (t2 + s[0]) * unit;
                t2 += s[0];
                return s[2] ? <rect key={j} x={x} y={y} width={bw} height={s[0] * unit} fill="none" stroke="#b03a2a" strokeWidth="1" /> : null;
              });
            })()}
          </g>
        );
      })}
    </>
  );
}
function Axis({ zero, unit, max, x, x1, x2, fs = 3.6 }: { zero: number; unit: number; max: number; x: number; x1: number; x2: number; fs?: number }) {
  const ticks = Array.from({ length: max / 2 + 1 }, (_, i) => i * 2);
  return (
    <>
      {ticks.map((t) => (
        <g key={t}>
          <line x1={x1} x2={x2} y1={zero - t * unit} y2={zero - t * unit} stroke="#e4e4e4" strokeWidth=".8" />
          <text x={x} y={zero - t * unit + 1.2} fontSize={fs} fill="#555" textAnchor="middle">{t}</text>
        </g>
      ))}
    </>
  );
}
function XLabels({ x0, dx, y1, y2 }: { x0: number; dx: number; y1: number; y2: number }) {
  return (
    <>
      {WK.map((w, i) => {
        const [a, b] = [w.slice(0, w.lastIndexOf("-") + 1), w.slice(w.lastIndexOf("-") + 1)];
        return (
          <g key={i}>
            <text x={x0 + i * dx} y={y1} fontSize="3.800" fill="#555" textAnchor="middle">{a}</text>
            <text x={x0 + i * dx} y={y2} fontSize="3.800" fill="#555" textAnchor="middle">{b}</text>
          </g>
        );
      })}
    </>
  );
}
const L1 = ["GATSG01", "GATSG02", "GATSG03", "GATSG04", "GATSG05", "GATSG06", "GATSG07", "GATSL02", "GATSL03", "GATSL03"];
const L2 = ["GATSL04", "GATSL05", "GATSL06", "GATSL07", "GATSL10", "GATSL11", "GATSL13", "GATSL14", "GATSL15"];
const LC1 = [BL, RD, GR, PU, CY, OR, NV, MR, OL, LP];
const LC2 = ["#3a5f96", RS, "#b0c67c", "#5a4785", HL, "#eeb07a", "#b0282e", "#d49a96", NV];
const legend3 = [
  "#N/A/SGCNEE01,ANALYSIS_ANALYSIS.GBWORKE,",
  "Load port Error",
  P("CP130"),
  "QCNG Nanowork",
  "Focus Error",
  E("3291865 - NETERR-INVALIDCONN"),
  "(1021)Module Process Failure - Module 3",
  "Object Logger encountered an asynchronous thread processing exception.",
  E("787344 - JOBERR-FINISHLOADWA"),
  E("3342696 - SYSERR-NANOWANTHRE"),
  P("CP108"),
  "(4000)Wafer Transfer Failed",
  E("786775 - JOBERR-SYSTEMLAMPU"),
  E("1771629 - FILMERR-PARALLELFI"),
  P("FP101"),
  P("CP110"),
  NANO,
  "Wafer Transfer Failed",
  "SOCKET ERROR_ An existing connection was forcibly closed by remo",
  "QCNG",
  LONG,
  "Operation (TransferOperation(RobotdefaultPick-Arm1-LP2-5)",
  PF("EPO256104-19"),
  "Operation (ProcessOperation - ProcessChamber 1 Subst=EPO209019-05) failed with error: Process failed on Module 1: ALID=3342696 SYSERR_NANOWANTHREAD",
];
const LC3 = [GN, "#888", BL, "#333", RS, NV, OR, LP, "#333", CY, BL, OL, GR, NV, BL, BL, "#76893f", OR, OL, GR, "#888", "#888", "#888", "#888"];

function Sheet2() {
  return (
    <div className="relative h-[642px] overflow-hidden bg-white blur-[0.3px]" style={{ fontFamily: 'Lato, "Liberation Sans", sans-serif' }}>
      <div className="grid grid-cols-[12px_131px_58px_56px_57px_57px_55px_55px_54px_55px_55px_57px_58px_59px_33px_54px_45px] h-[10px] bg-black text-white text-[4.6px] leading-[10px] font-bold text-center">
        <div />
        {["A", ...cols2].map((c) => (
          <div key={c} className={`border-r border-[#555] ${c === "M" ? "bg-[#5b5b5b] border-b border-b-[#4f8a63]" : ""}`}>{c}</div>
        ))}
      </div>
      <div className="grid grid-cols-[12px_1fr] h-[3px]"><div className="bg-black" /><div /></div>
      {nums2.map((n) => {
        const r = rows2[n] || {};
        const head = r.k === "head";
        return (
          <div key={n} className="grid grid-cols-[12px_131px_58px_56px_57px_57px_55px_55px_54px_55px_55px_57px_58px_59px_33px_54px_45px] h-[8.11px] text-[6px] tracking-[-0.03em] leading-[7.6px] text-black">
            <div className="bg-black text-white text-[4.8px] font-bold text-center border-b border-[#555]">{n}</div>
            <div className={`whitespace-nowrap pl-[1px] border-r border-b border-[#d8d8d8] ${head ? "bg-[#dbe5f1] font-bold" : ""}`}>{r.a}</div>
            {cols2.map((c, ci) => {
              const val = r.v?.[c];
              const isText = typeof val === "string";
              const rAlign = r.k === "hdr2" && c === "L";
              return (
                <div key={c} className={`whitespace-nowrap border-r border-b border-[#d8d8d8] ${head && ci < 3 ? "bg-[#dbe5f1] font-bold" : ""} ${rAlign ? "flex justify-end pr-[1px]" : isText ? "text-left pl-[1px]" : "text-right pr-[3px]"}`}>
                  {val}
                </div>
              );
            })}
          </div>
        );
      })}

      {/* chart 1 */}
      <div className="absolute left-[297px] top-[13px] w-[443px] h-[150px] bg-white">
        <svg width="443" height="150" viewBox="0 0 443 150">
          <Axis zero={113} unit={6.73} max={16} x={6} x1={10} x2={436} />
          <Bars data={stack1} x0={29.6} dx={35.4} bw={14} zero={113} unit={6.73} />
          <XLabels x0={29.6} dx={35.4} y1={120} y2={125.500} />
          {L1.map((l, i) => (
            <g key={i}>
              <rect x={112 + i * 22.2} y="133.500" width="2" height="2" fill={LC1[i]} />
              <text x={114.500 + i * 22.2} y="136" fontSize="3.600" fill="#555">{l}</text>
            </g>
          ))}
          {L2.map((l, i) => (
            <g key={i}>
              <rect x={112 + i * 22.2} y="141.500" width="2" height="2" fill={LC2[i]} />
              <text x={114.500 + i * 22.2} y="144" fontSize="3.600" fill="#555">{l}</text>
            </g>
          ))}
        </svg>
      </div>
      {/* chart 2 */}
      <div className="absolute left-[299px] top-[170px] w-[441px] h-[122px] bg-white">
        <svg width="441" height="122" viewBox="0 0 441 122">
          <text x="220" y="11" fontSize="6.500" fill="#666" textAnchor="middle">Error log sorted by FAB</text>
          <Axis zero={92.300} unit={4.1} max={18} x={6} x1={10} x2={434} />
          <Bars data={stack2} x0={30} dx={35.2} bw={14} zero={92.300} unit={4.1} />
          <XLabels x0={30} dx={35.2} y1={99} y2={105} />
          <rect x="209" y="112.500" width="2" height="2" fill="#4f81bd" />
          <text x="212" y="115" fontSize="3.600" fill="#555">Y2</text>
          <rect x="219" y="112.500" width="2" height="2" fill="#c0504d" />
          <text x="222" y="115" fontSize="3.600" fill="#555">Y5</text>
        </svg>
      </div>
      {/* chart 3 */}
      <div className="absolute left-[304px] top-[313px] w-[437px] h-[239px] bg-white">
        <svg width="437" height="239" viewBox="0 0 437 239">
          <text x="217" y="10" fontSize="6.500" fill="#666" textAnchor="middle">Error Log sorted by label</text>
          <Axis zero={90} unit={4.02} max={18} x={4} x1={8} x2={430} />
          <Bars data={stack3} x0={27.7} dx={35.07} bw={14} zero={90} unit={4.02} />
          <XLabels x0={27.7} dx={35.07} y1={97} y2={103} />
          {legend3.map((l, i) => (
            <g key={i}>
              <rect x="54" y={115.500 + i * 5.01} width="2" height="2.500" fill={LC3[i]} />
              <text x="57" y={118 + i * 5.01} fontSize="4.200" fill="#444">{l}</text>
            </g>
          ))}
        </svg>
      </div>
    </div>
  );
}

/* ---------- page ---------- */
export default function App() {
  return (
    <div className="relative w-full h-[942px] overflow-hidden bg-white" style={{ fontFamily: "Inter, sans-serif" }}>
      <div className="pl-[69px] pt-[64px] w-[400px]">
        <div className="text-[31.8px] leading-[42px] font-semibold text-[#8f8f8f]">
          Before Final
          <br />
          Solution
        </div>
        <div className="mt-[39px] text-[66px] leading-[84.3px] font-normal text-[#2d2d2d] tracking-[-0.5px]">
          Manually
          <br />
          collected
          <br />
          data on
          <br />
          excel
        </div>
      </div>

      {/* back window */}
      <div className="absolute left-[420px] top-0 w-[1164px] h-[701px] bg-[#262626] flex flex-col shadow-[0_0_70px_rgba(0,0,0,0.18)]">
        <Tabs actions />
        <Ribbon />
        <FormulaBar />
        <div className="h-[2px] bg-white" />
        <Sheet1 />
        <div className="h-[21px] flex items-center bg-[#2b2b2b] text-[#e0e0e0] border-b border-[#161616]">
          <div className="w-[49px] flex items-center pl-[10px] gap-[9px] border-r border-[#444] h-[16px]">
            <svg width="8" height="10" viewBox="0 0 8 10"><path d="M7 0v10L0 5z" fill="#bdbdbd" /></svg>
            <svg width="8" height="10" viewBox="0 0 8 10"><path d="M1 0v10l7-5z" fill="#6a6a6a" /></svg>
          </div>
          <div className="w-[64px] h-[21px] flex items-center justify-center text-[9.5px] text-[#5f8f72] font-medium bg-[linear-gradient(90deg,#333_0%,#ddd_25%,#fff_45%)]">Pivot (2)</div>
          <div className="w-[99px] h-[21px] flex items-center pl-[15px] text-[9.6px] text-[#8e8e8e] bg-[#1f1f1f] border-r border-[#444] whitespace-nowrap">ATII All error log</div>
          <div className="w-[31px] h-[16px] flex items-center justify-center text-[16px] text-[#d8d8d8] border-r border-[#444]">+</div>
        </div>
        <div className="flex-1 flex items-center bg-[#3b3b3b] text-[10.5px] text-[#e6e6e6] pl-[20px]">
          <span className="w-[44px]">Ready</span>
          <svg width="13" height="13" viewBox="0 0 13 13" fill="none" stroke="#ddd" strokeWidth=".8"><circle cx="6.500" cy="2" r="1.500" /><path d="M1 4l4 1.500h3L12 4M5 5.500v2L3 12M8 5.500v2l2 4.500M2 11L11 2M3 2l8 9" /></svg>
          <span className="ml-[3px]">Accessibility: Investigate</span>
        </div>
      </div>

      {/* front window */}
      <div className="absolute left-[955px] top-[128px] w-[951px] h-[814px] bg-[#262626] overflow-hidden flex flex-col shadow-[0_0_30px_rgba(0,0,0,0.12)]">
        <div className="h-[32.5px] shrink-0 flex items-center relative pl-[22px] pt-[7px] text-[#e8e8e8]">
          <span className="text-[11px] w-[57px] font-medium">AutoSave</span>
          <span className="w-[30px] h-[13px] rounded-full bg-[#1c1c1c] shrink-0">
            <span className="block w-[12px] h-[12px] rounded-full bg-white" />
          </span>
          <div className="flex items-center ml-[10px] text-[#e0e0e0]">
            <House size={16} strokeWidth={1.3} />
            <span className="ml-[11px]"><SaveIcon /></span>
            <span className="ml-[12px]"><SaveIcon pen /></span>
            <Undo2 size={16} strokeWidth={1.3} className="ml-[11px] text-[#666]" />
            <ChevronDown size={9} className="ml-[7px] text-[#666]" />
            <RotateCw size={18} strokeWidth={1.3} className="ml-[8px]" />
            <Ellipsis size={13} className="ml-[12px]" />
          </div>
          <div className="absolute left-[583px] top-[12px] flex items-center">
            <svg width="13" height="16" viewBox="0 0 13 16"><path d="M2 0h7l4 4v12H2z" fill="#f4f4f4" /><rect x="0" y="4" width="8" height="8" fill="#1d7a45" /><text x="2" y="10.500" fontSize="6.500" fill="#fff" fontFamily="Inter, sans-serif">X</text></svg>
            <span className="ml-[5px] text-[12.1px] font-medium text-[#ececec] whitespace-nowrap">Toshiba ATLASII+ Error Count Tracker 8-29-18</span>
            <ChevronDown size={10} className="ml-[2px]" />
          </div>
        </div>
        <div className="[zoom:1.25] overflow-hidden w-[761px] shrink-0">
          <Tabs />
          <Ribbon />
          <FormulaBar />
        </div>
        <div className="h-[2px] bg-[#161616] shrink-0" />
        <div className="h-[2px] bg-white shrink-0" />
        <Sheet2 />
      </div>
    </div>
  );
}
